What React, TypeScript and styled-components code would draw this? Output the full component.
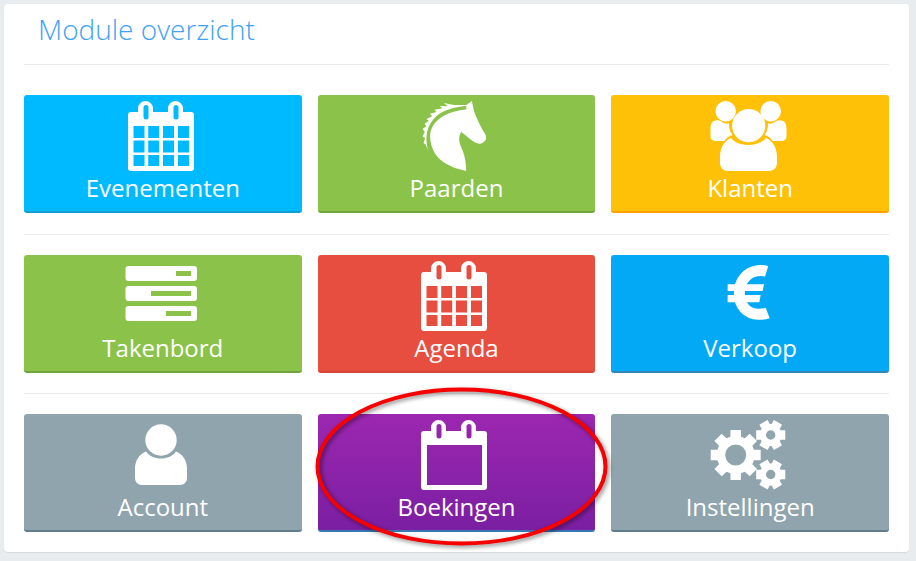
import { ReactNode } from "react";
import styled, { createGlobalStyle } from "styled-components";

const GlobalStyle = createGlobalStyle`
  html, body {
    margin: 0;
    padding: 0;
    background: #e8ecef;
    font-family: "Open Sans", "Liberation Sans", sans-serif;
  }
`;

const calendarOutline =
  "M8 11H15V7.5A7.5 7.5 0 0 1 30 7.5V11H45V7.5A7.5 7.5 0 0 1 60 7.5V11H68A3 3 0 0 1 71 14V67A3 3 0 0 1 68 70H8A3 3 0 0 1 5 67V14A3 3 0 0 1 8 11Z";
const calendarSlots =
  "M20.5 6.5a2.5 2.5 0 0 1 5 0V16a2.5 2.5 0 0 1 -5 0ZM50.5 6.5a2.5 2.5 0 0 1 5 0V16a2.5 2.5 0 0 1 -5 0Z";

const rect = (x: number, y: number, w: number, h: number) =>
  `M${x} ${y}h${w}v${h}h${-w}Z`;

const gridCells = [25, 39.5, 54]
  .flatMap((y) =>
    [10.5, 25.2, 40, 55].map((x) => rect(x, y, 11, y === 54 ? 11 : 12)),
  )
  .join("");

const roundBar = (y: number) =>
  `M5.5 ${y}H71a3 3 0 0 1 3 3V${y + 12}a3 3 0 0 1 -3 3H5.5a3 3 0 0 1 -3 -3V${y + 3}a3 3 0 0 1 3 -3Z`;

const circle = (cx: number, cy: number, r: number) =>
  `M${cx - r} ${cy}a${r} ${r} 0 1 0 ${r * 2} 0a${r} ${r} 0 1 0 ${-r * 2} 0Z`;

// tandwiel als polygoon met gat
const gear = (
  cx: number,
  cy: number,
  outer: number,
  inner: number,
  hole: number,
  teeth: number,
  start: number,
  tip: number,
  root: number,
) => {
  const pts: string[] = [];
  const step = (Math.PI * 2) / teeth;
  for (let i = 0; i < teeth; i++) {
    const a = i * step + start;
    const list: [number, number][] = [
      [a - step * root, inner],
      [a - step * tip, outer],
      [a + step * tip, outer],
      [a + step * root, inner],
    ];
    list.forEach(([ang, r]) =>
      pts.push(`${(cx + Math.cos(ang) * r).toFixed(2)} ${(cy + Math.sin(ang) * r).toFixed(2)}`),
    );
  }
  return `M${pts.join("L")}Z${circle(cx, cy, hole)}`;
};

const IconSvg = ({ children, box = "0 0 80 70" }: { children: ReactNode; box?: string }) => (
  <svg width="80" height="70" viewBox={box} fill="#fff" fillRule="evenodd" overflow="visible">
    {children}
  </svg>
);

const CalendarIcon = () => (
  <IconSvg>
    <path d={calendarOutline + calendarSlots + gridCells} />
  </IconSvg>
);

const PlainCalendarIcon = () => (
  <IconSvg>
    <path d={calendarOutline + calendarSlots + rect(11, 25, 55, 40)} />
  </IconSvg>
);

const HorseIcon = () => (
  <IconSvg box="4.5 12 240 210">
    <path d="M172 12L178 40C184 60 198 90 213 113C218 124 213 136 197 140C186 141 178 135 168 127C158 119 150 112 140 105C132 118 132 132 140 150C150 172 155 195 155 222C125 216 95 205 73 184C55 165 46 140 47 112C50 88 64 70 88 56C108 46 132 40 156 37L155 25Z" />
    <path d="M157 27C128 29 96 36 74 51C50 68 37 93 36 120C35 134 37 148 42 162L33 142L27 138L32 124L24 118L31 105L24 96L36 88L30 80L43 72L36 66L53 58L46 50L66 45L60 38L84 34L76 27L100 28L88 18L118 24L157 24Z" />
  </IconSvg>
);

const GroupIcon = () => (
  <IconSvg>
    <path d={circle(15.7, 10.3, 10.3) + circle(60.7, 10.3, 10.3)} />
    <path d="M6 19.5C8 19 9 19 10.5 20C13 22 16 23 19 22.5C18.8 27 20 31 22.5 34C19 35 16 37 14.5 40H5A4.5 4.5 0 0 1 0.5 35V28C0.5 23 2 20 6 19.5Z" />
    <path d="M71 19.5C69 19 68 19 66.5 20C64 22 61 23 58 22.5C58.2 27 57 31 54.5 34C58 35 61 37 62.5 40H72A4.5 4.5 0 0 0 76.5 35V28C76.5 23 75 20 71 19.5Z" />
    <path d={circle(38.7, 24.7, 16.6)} />
    <path d="M21 37C25 42 32 44 38.5 44C45 44 52 42 56 37C63 40 67 47 67 56V62C67 67 63 70 59 70H18C14 70 10 67 10 62V56C10 47 14 40 21 37Z" />
  </IconSvg>
);

const BoardIcon = () => (
  <IconSvg>
    <path d={roundBar(5) + rect(53, 10, 15, 5)} />
    <path d={roundBar(25) + rect(28, 30, 40, 5)} />
    <path d={roundBar(45) + rect(43, 50, 25, 5)} />
  </IconSvg>
);

const EuroIcon = () => (
  <IconSvg box="330 48 240 210">
    <path
      d="M500 79C490 76 482 76 473 77C440 82 418 108 418 145C418 184 442 207 475 208C485 208 495 207 503 204"
      fill="none"
      stroke="#fff"
      strokeWidth="33"
    />
    <path d="M383 118H492L488 138H383ZM383 150H482L478 172H383Z" />
  </IconSvg>
);

const PersonIcon = () => (
  <IconSvg>
    <path d={circle(38, 20, 15.7)} />
    <path d="M23 31.5C26 36 32 38.5 38 38.5C44 38.5 50 36 53 31.5C60 34 64 41 64 49V58C64 62 61 65 57 65H19C15 65 12 62 12 58V49C12 41 16 34 23 31.5Z" />
  </IconSvg>
);

const GearsIcon = () => (
  <IconSvg>
    <path d={gear(25.7, 35, 25.5, 19, 10.5, 8, -Math.PI / 2, 0.26, 0.36)} />
    <path d={gear(60.7, 15, 15.3, 11, 4.7, 6, 0, 0.3, 0.42)} />
    <path d={gear(60.7, 54.5, 15.3, 11, 4.7, 6, 0, 0.3, 0.42)} />
  </IconSvg>
);

type Module = {
  label: string;
  bg: string;
  edge: string;
  icon: ReactNode;
};

const rows: Module[][] = [
  [
    { label: "Evenementen", bg: "#00baff", edge: "#0d9fd3", icon: <CalendarIcon /> },
    { label: "Paarden", bg: "#8bc34a", edge: "#6da53a", icon: <HorseIcon /> },
    { label: "Klanten", bg: "#ffc107", edge: "#ffa000", icon: <GroupIcon /> },
  ],
  [
    { label: "Takenbord", bg: "#8bc34a", edge: "#6da53a", icon: <BoardIcon /> },
    { label: "Agenda", bg: "#e84e40", edge: "#d84436", icon: <CalendarIcon /> },
    { label: "Verkoop", bg: "#03a9f4", edge: "#2f86b8", icon: <EuroIcon /> },
  ],
  [
    { label: "Account", bg: "#90a4ae", edge: "#607d8b", icon: <PersonIcon /> },
    {
      label: "Boekingen",
      bg: "linear-gradient(#9c27b0, #7b1fa2)",
      edge: "#3a78b5",
      icon: <PlainCalendarIcon />,
    },
    { label: "Instellingen", bg: "#90a4ae", edge: "#607d8b", icon: <GearsIcon /> },
  ],
];

export default function App() {
  return (
    <Page>
      <GlobalStyle />
      <Panel>
        <Header>
          <Title>Module overzicht</Title>
        </Header>
        <Rows>
          {rows.map((row, i) => (
            <TileRow key={i} $ruled={i > 0}>
              {row.map((m) => (
                <Tile key={m.label} $bg={m.bg} $edge={m.edge}>
                  <IconSlot>{m.icon}</IconSlot>
                  <Label>{m.label}</Label>
                </Tile>
              ))}
            </TileRow>
          ))}
        </Rows>
      </Panel>
      <Circled width="916" height="561" viewBox="0 0 916 561">
        <ellipse cx="461.5" cy="466.5" rx="144" ry="77" fill="none" stroke="#f60000" strokeWidth="4" />
      </Circled>
    </Page>
  );
}

const Page = styled.div`
  position: relative;
  width: 916px;
  height: 561px;
  padding: 4px 7px 9px 4px;
  box-sizing: border-box;
  overflow: hidden;
`;

const Panel = styled.section`
  height: 548px;
  box-sizing: border-box;
  padding: 0 20px;
  background: #fff;
  border-radius: 4px;
  box-shadow: 0 1px 1px rgba(0, 0, 0, 0.08);
`;

const Header = styled.header`
  height: 61px;
  box-sizing: border-box;
  padding: 6px 0 0 14px;
  border-bottom: 1px solid #e9ebec;
`;

const Title = styled.h1`
  margin: 0;
  font-size: 28px;
  font-weight: 300;
  line-height: 38px;
  color: #3fa2f5;
`;

const Rows = styled.div`
  padding-top: 30px;
`;

const TileRow = styled.div<{ $ruled: boolean }>`
  display: grid;
  grid-template-columns: repeat(3, 1fr);
  column-gap: 16px;
  ${(p) =>
    p.$ruled &&
    `
    margin-top: 20.5px;
    padding-top: 20px;
    border-top: 1px solid #e9ebec;
  `}
`;

const Tile = styled.a<{ $bg: string; $edge: string }>`
  display: flex;
  flex-direction: column;
  align-items: center;
  height: 118px;
  box-sizing: border-box;
  padding-top: 6px;
  background: ${(p) => p.$bg};
  border-bottom: 2px solid ${(p) => p.$edge};
  border-radius: 3px;
  color: #fff;
`;

const IconSlot = styled.div`
  width: 80px;
  height: 70px;
  svg {
    display: block;
  }
`;

const Label = styled.span`
  margin-top: 5px;
  font-size: 24px;
  line-height: 24px;
`;

const Circled = styled.svg`
  position: absolute;
  left: 0;
  top: 0;
  pointer-events: none;
  filter: drop-shadow(2px 2px 2px rgba(0, 0, 0, 0.45));
`;
